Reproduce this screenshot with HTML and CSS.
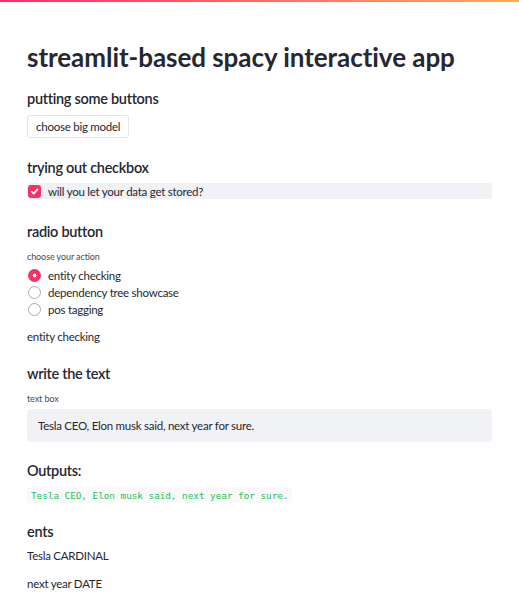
FILE: index.html
```html
<!DOCTYPE html>
<html>
<head>
<meta charset="utf-8">
<link rel="stylesheet" href="styles.css">
</head>
<body>
<div class="decoration"></div>
<main class="main">
  <h1 class="title">streamlit-based spacy interactive app</h1>
  <h3 class="h3 h-buttons">putting some buttons</h3>
  <button class="btn">choose big model</button>
  <h3 class="h3 h-checkbox">trying out checkbox</h3>
  <label class="checkrow">
    <span class="checkbox"><svg width="9" height="9" viewBox="0 0 9 9"><path d="M1.6 4.6 L3.7 6.6 L7.5 2.4" fill="none" stroke="#fff" stroke-width="1.7" stroke-linecap="round" stroke-linejoin="round"/></svg></span>
    <span class="checktext">will you let your data get stored?</span>
  </label>
  <h3 class="h3 h-radio">radio button</h3>
  <div class="label l-radio">choose your action</div>
  <div class="radios">
    <div class="radio"><span class="dot on"></span><span>entity checking</span></div>
    <div class="radio"><span class="dot"></span><span>dependency tree showcase</span></div>
    <div class="radio"><span class="dot"></span><span>pos tagging</span></div>
  </div>
  <p class="text t-entity">entity checking</p>
  <h3 class="h3 h-write">write the text</h3>
  <div class="label l-box">text box</div>
  <div class="textbox">Tesla CEO, Elon musk said, next year for sure.</div>
  <h3 class="h3 h-out">Outputs:</h3>
  <div class="codewrap"><code class="code">Tesla CEO, Elon musk said, next year for sure.</code></div>
  <h3 class="h3 h-ents">ents</h3>
  <p class="text t-ent1">Tesla CARDINAL</p>
  <p class="text t-ent2">next year DATE</p>
</main>
</body>
</html>
```

FILE: styles.css
```css
html, body {
  margin: 0;
  padding: 0;
  background: #ffffff;
}
body {
  font-family: "Lato", "Noto Sans", sans-serif;
  color: #262730;
  overflow: hidden;
}
.decoration {
  height: 2px;
  background: linear-gradient(90deg, #fb2e66, #ffaa5e);
}
.main {
  display: flex;
  flex-direction: column;
  align-items: flex-start;
  padding: 0 27px;
}
.title {
  margin: 39px 0 0;
  font-size: 26px;
  line-height: 32px;
  font-weight: 700;
  letter-spacing: -0.05px;
}
.h3 {
  margin: 0;
  font-size: 14.5px;
  line-height: 18px;
  font-weight: 600;
  letter-spacing: -0.3px;
}
.h-buttons { margin-top: 17px; }
.btn {
  margin-top: 7px;
  height: 23px;
  padding: 0 8px;
  font-family: inherit;
  font-size: 11.5px;
  letter-spacing: -0.25px;
  color: #262730;
  background: #fff;
  border: 1px solid #e3e4e8;
  border-radius: 3px;
}
.h-checkbox { margin-top: 21px; }
.checkrow {
  margin-top: 6px;
  align-self: stretch;
  height: 16px;
  background: #f0f2f6;
  border-radius: 2px;
  display: flex;
  align-items: center;
  gap: 7px;
  padding-left: 1px;
}
.checkbox {
  width: 13px;
  height: 13px;
  background: #f63366;
  border-radius: 3px;
  display: flex;
  align-items: center;
  justify-content: center;
}
.checktext {
  font-size: 11.5px;
  line-height: 15px;
  letter-spacing: -0.25px;
}
.h-radio { margin-top: 24px; }
.label {
  font-size: 9px;
  line-height: 11px;
  color: #4a4b55;
  letter-spacing: -0.1px;
}
.l-radio { margin-top: 10px; }
.radios {
  margin-top: 5px;
  display: flex;
  flex-direction: column;
}
.radio {
  height: 17px;
  display: flex;
  align-items: center;
  gap: 7px;
  font-size: 11.5px;
  letter-spacing: -0.25px;
  padding-left: 1px;
}
.dot {
  width: 11px;
  height: 11px;
  border: 1px solid #a7a9b7;
  border-radius: 50%;
  background: #fff;
  box-sizing: content-box;
}
.dot.on {
  width: 13px;
  height: 13px;
  border: none;
  background: radial-gradient(circle, #fff 0 1.7px, #f63366 2.2px);
}
.text {
  margin: 0;
  font-size: 11.5px;
  line-height: 15px;
  letter-spacing: -0.25px;
}
.t-entity { margin-top: 11px; }
.h-write { margin-top: 21px; }
.l-box { margin-top: 10px; }
.textbox {
  margin-top: 5px;
  align-self: stretch;
  height: 33px;
  box-sizing: border-box;
  padding: 0 11px;
  display: flex;
  align-items: center;
  background: #f0f2f6;
  border-radius: 4px;
  font-size: 11.5px;
  letter-spacing: -0.25px;
}
.h-out { margin-top: 20px; }
.codewrap {
  margin-top: 7px;
  height: 16px;
  background: #f9f9fb;
  border-radius: 2px;
  padding: 0 4px;
  display: flex;
  align-items: center;
}
.code {
  font-family: "DejaVu Sans Mono", "Liberation Mono", monospace;
  font-size: 9.3px;
  color: #21c354;
}
.h-ents { margin-top: 20px; }
.t-ent1 { margin-top: 7px; }
.t-ent2 { margin-top: 13px; }
```
